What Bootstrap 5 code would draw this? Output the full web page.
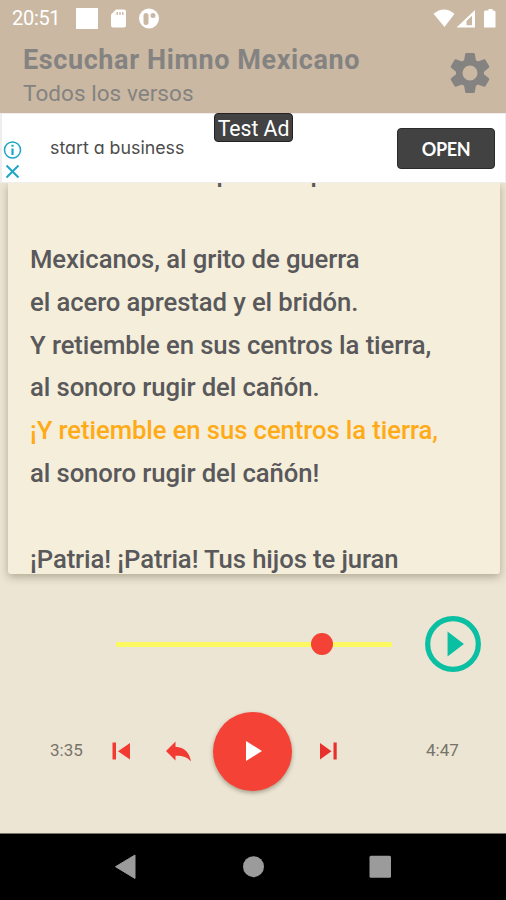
<!DOCTYPE html>
<html lang="es">
<head>
<meta charset="utf-8">
<meta name="viewport" content="width=device-width, initial-scale=1">
<title>Escuchar Himno Mexicano</title>
<link href="https://cdn.jsdelivr.net/npm/bootstrap@5.3.0/dist/css/bootstrap.min.css" rel="stylesheet">
<style>
body{width:506px;height:900px;background:#ece5d3;font-family:Roboto,sans-serif;color:#59585a}
svg{display:block;flex:none}
.top-area{height:113px;background:#cab8a3;flex:none}
.status-row{height:37px;color:#fff;font-size:20px;padding:0 9px 0 12px}
.status-row .clock{width:64px;line-height:37px;letter-spacing:-.3px}
.title-row{height:76px;padding:0 15px 0 23px;color:#848381}
.app-title{font-size:27px;font-weight:700;line-height:32px;margin:7px 0 0;letter-spacing:.61px}
.app-sub{font-size:22.5px;line-height:28px;margin:3px 0 0;letter-spacing:.05px}
.ad-bar{height:70px;background:#fff;flex:none;border:solid #efeeee;border-width:1px 1px 1px 2px;z-index:2;color:#4c4c4c}
.ad-marks{width:21px;padding:26px 0 0 1px}
.ad-copy{font:17.8px/24px Inter,sans-serif;font-feature-settings:"cv11";padding:22px 0 0 27px}
.ad-label{left:212px;top:-1px;width:79px;height:29px;border-radius:4px;background:#424242;border:1px solid #222;color:#fff;font-size:21.2px;line-height:29px;text-align:center;white-space:nowrap}
.ad-open{width:98px;height:41px;margin:14px 10px 0 0;border-radius:4px;background:#424242;border:1px solid #2b2b2b;color:#fff;font:700 18px/36px Lato,sans-serif;padding:0;letter-spacing:-.3px}
.lyrics{height:391px;margin:0 6px 0 8px;background:#f4eedb;border:0;border-radius:0 0 3px 3px;box-shadow:0 3px 8px rgba(80,70,45,.38);flex:none}
.lyrics-clip{height:391px;overflow:hidden;padding-left:22px}
.lyrics-clip p{margin:0;height:42.9px;font-size:25.7px;letter-spacing:-.09px;font-weight:500;line-height:43px;white-space:nowrap}
.lyrics-clip p:first-child{margin-top:-31px}
.lyrics-clip .now{color:#ffab17}
.seek-row{padding:3px 25px 0 116px}
.seek{width:276px;height:22px}
.seek .line{height:5px;background:#fbf860}
.seek .thumb{width:22px;height:22px;border-radius:50%;background:#f44336;top:0;transform:translateX(-50%)}
.controls{height:122px;flex:none;font-size:17px;color:#77736a}
.controls>div{height:80px}
.time-now{width:110px;padding-left:50px}
.fab{width:79px;height:79px;background:#f44336;box-shadow:0 2px 4px rgba(60,50,30,.4);border:0}
.nav-keys{height:67px;background:#000;flex:none;border-top:1px solid #77746b}
</style>
</head>
<body class="d-flex flex-column overflow-hidden m-0">
<header class="top-area">
  <div class="status-row d-flex align-items-center">
    <span class="clock">20:51</span>
    <svg width="88" height="22" viewBox="76 7 88 22"><path fill="#fff" d="M76 6.500h22v21.500H76z"/><path fill="#fff" fill-rule="evenodd" d="M116 8.500h8q2 0 2 2v14q0 2-2 2h-11q-2 0-2-2v-11zM116.500 11v3h1.400v-3zm2.800 0v3h1.400v-3zm2.800 0v3h1.400v-3z"/><circle cx="149" cy="17.500" r="10" fill="#fff"/><rect x="143.500" y="12" width="5" height="12" rx="2.500" fill="#cab8a3"/><circle cx="153" cy="14.500" r="2.500" fill="#cab8a3"/></svg>
    <svg class="ms-auto" width="64" height="20" viewBox="433 8 64 20"><path fill="#fff" d="M433.500 12.800q10.500-8.500 21 0L444.500 26z"/><path fill="#fff" fill-rule="evenodd" d="M456.500 26.500L475 9v17.500zM466.500 24.200h5.500v-9.500l-5.500 5.300z"/><path fill="#fff" d="M486.500 9.500h2V8h4v1.500h1.500q1.500 0 1.500 1.500v15.500H484V11q0-1.500 1.500-1.500z"/></svg>
  </div>
  <div class="title-row d-flex justify-content-between">
    <div>
      <h1 class="app-title">Escuchar Himno Mexicano</h1>
      <p class="app-sub">Todos los versos</p>
    </div>
    <svg width="42" height="72" viewBox="-21 -36 42 72" role="img" aria-label="Ajustes"><g fill="#848381"><path fill-rule="evenodd" d="M-14 0a14 14 0 1 0 28 0a14 14 0 1 0-28 0M-7.500 0a7.500 7.500 0 1 1 15 0a7.500 7.500 0 1 1-15 0"/><path id="tooth" d="M-6-12L-4.800-19q.2-1 1.200-1h7.200q1 0 1.200 1L6-12z"/><use href="#tooth" transform="rotate(60)"/><use href="#tooth" transform="rotate(120)"/><use href="#tooth" transform="rotate(180)"/><use href="#tooth" transform="rotate(240)"/><use href="#tooth" transform="rotate(300)"/></g></svg>
  </div>
</header>

<section class="ad-bar position-relative d-flex">
  <div class="ad-marks">
    <svg width="19" height="42" viewBox="3 140 19 42" fill="none" stroke="#1fa5c6" stroke-width="1.500"><circle cx="12.500" cy="150" r="8"/><path d="M12.500 148.500v6.500M12.500 144.800v2" stroke-width="2.200"/><path d="M6.500 165.500l12 12m0-12l-12 12" stroke-width="2"/></svg>
  </div>
  <div class="ad-copy">start a business</div>
  <span class="ad-label position-absolute">Test Ad</span>
  <button class="ad-open btn ms-auto">OPEN</button>
</section>

<main class="lyrics card">
  <div class="lyrics-clip">
    <p>de mil héroes la patria aquí fue.</p>
    <p></p>
    <p>Mexicanos, al grito de guerra</p>
    <p>el acero aprestad y el bridón.</p>
    <p>Y retiemble en sus centros la tierra,</p>
    <p>al sonoro rugir del cañón.</p>
    <p class="now">¡Y retiemble en sus centros la tierra,</p>
    <p>al sonoro rugir del cañón!</p>
    <p></p>
    <p>¡Patria! ¡Patria! Tus hijos te juran</p>
  </div>
</main>

<div class="seek-row d-flex align-items-center justify-content-between flex-grow-1">
  <div class="seek position-relative d-flex align-items-center">
    <div class="line w-100"></div>
    <span class="thumb position-absolute" style="left:74.600%"></span>
  </div>
  <svg width="56" height="56" viewBox="-28.200 -28.200 56.400 56.400"><circle r="25.500" fill="none" stroke="#0bbfa3" stroke-width="5.300"/><path d="M-5.500-12.500L11 0L-5.500 12.500z" fill="#0bbfa3"/></svg>
</div>

<div class="controls">
  <div class="d-flex align-items-center">
    <span class="time-now">3:35</span>
    <svg width="103" height="30" viewBox="110 736.500 103 30" fill="#f23a33"><path d="M112.500 743h3.500v17h-3.500zM130 743.500v16.500l-12-8.300z"/><path d="M166 751.500l9.500-9.500v5.300c9 .5 14 6 15.500 14.700c-4-4.500-8.500-6-15.500-5.800v4.800z"/></svg>
    <button class="fab btn rounded-circle p-0 d-flex align-items-center justify-content-center"><svg width="20" height="22" viewBox="0 0 20 22"><path d="M3 1v20l16-10z" fill="#fff"/></svg></button>
    <svg width="134" height="30" viewBox="292 736.500 134 30" fill="#e8302c"><path d="M320 743.500v16.500l11.500-8.300zM333.500 743h3.200v17h-3.200z"/></svg>
    <span>4:47</span>
  </div>
</div>

<nav class="nav-keys d-flex justify-content-center">
  <svg width="506" height="66" viewBox="0 834 506 66" fill="#9b9b9b"><path d="M115.500 866.700L135 855v23.500z" stroke="#9b9b9b" stroke-linejoin="round"/><circle cx="253.500" cy="866.700" r="10.500"/><rect x="369.500" y="855.800" width="21.500" height="22" rx="1.500"/></svg>
</nav>
<script src="https://cdn.jsdelivr.net/npm/bootstrap@5.3.0/dist/js/bootstrap.bundle.min.js"></script>
</body>
</html>
